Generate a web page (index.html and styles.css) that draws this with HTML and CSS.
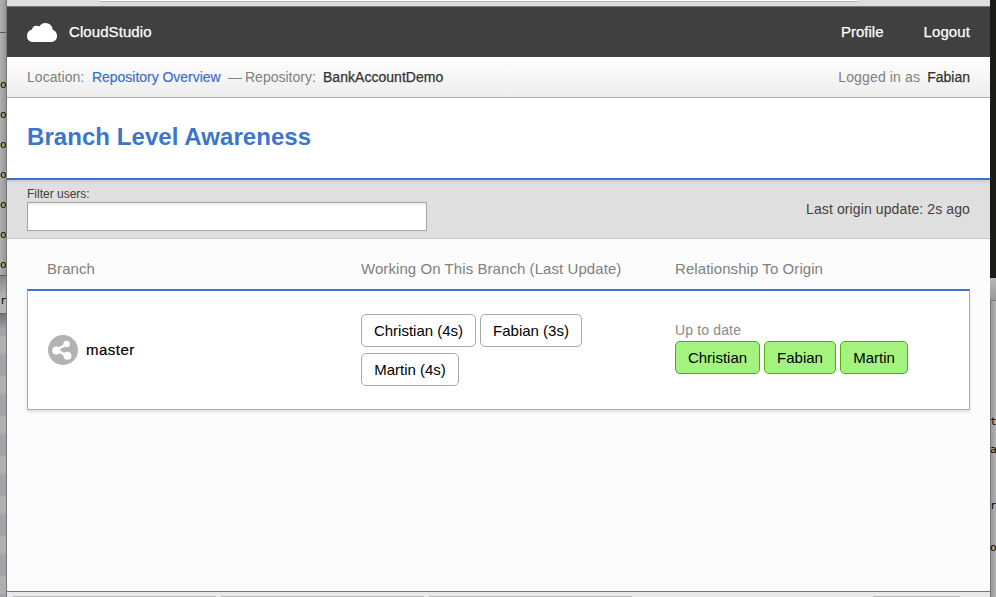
FILE: index.html
```html
<!DOCTYPE html>
<html lang="en">
<head>
<meta charset="utf-8">
<title>CloudStudio</title>
<link rel="stylesheet" href="styles.css">
</head>
<body>
<div class="desktop">
  <aside class="behind-left">
    <div class="editor-left"><span>o</span><span>o</span><span>o</span><span>o</span><span>o</span><span>o</span><span>o</span></div>
    <div class="status-left"><span>r</span></div>
    <div class="list-left"></div>
  </aside>
  <main class="window">
    <div class="chrome-top"><div class="address"></div></div>
    <nav class="nav">
      <div class="brand">
        <svg class="cloud" viewBox="0 0 30 19" width="30" height="19"><path fill="#fff" d="M6 19C2.300 19 0 16.500 0 13 0 9.600 2 7.200 5 6.600 5.300 4.300 7 2.800 9.400 2.800c1.200 0 2.200.2 3 .7C13.600 1.300 15.600 0 18.200 0c4.200 0 7.300 2.900 7.500 6.800 2.700 1 4.300 3.200 4.300 6.200 0 3.500-2.300 6-6 6z"/></svg>
        <span class="t-brand">CloudStudio</span>
      </div>
      <div class="links"><a class="t-profile">Profile</a><a class="t-logout">Logout</a></div>
    </nav>
    <div class="crumbs">
      <div class="path"><span class="t-loc">Location:</span><a class="t-over">Repository Overview</a><span class="t-dash">—</span><span class="t-repo">Repository:</span><strong class="t-bank">BankAccountDemo</strong></div>
      <div class="user"><span class="t-logged">Logged in as</span><strong class="t-user">Fabian</strong></div>
    </div>
    <header class="title"><h1>Branch Level Awareness</h1></header>
    <div class="filter">
      <div class="field"><label for="f">Filter users:</label><input id="f" type="text"></div>
      <span class="t-update">Last origin update: 2s ago</span>
    </div>
    <section class="content">
      <div class="row head"><span class="t-h1">Branch</span><span class="t-h2">Working On This Branch (Last Update)</span><span class="t-h3">Relationship To Origin</span></div>
      <div class="row card">
        <div class="branch">
          <svg width="30" height="30" viewBox="0 0 30 30"><circle cx="15" cy="15" r="15" fill="#b2b2b2"/><path d="M18.500 9 8.500 15.200l11 5.800" fill="none" stroke="#fff" stroke-width="2.600"/><g fill="#fff"><circle cx="18.600" cy="9" r="3.300"/><circle cx="8.200" cy="15.400" r="4"/><circle cx="19.400" cy="20.800" r="4"/></g></svg>
          <span class="t-master">master</span>
        </div>
        <div class="tags"><span class="tag w115">Christian (4s)</span><span class="tag w102">Fabian (3s)</span><span class="tag w98">Martin (4s)</span></div>
        <div class="origin">
          <span class="t-up">Up to date</span>
          <div class="tags"><span class="tag green w85">Christian</span><span class="tag green w72">Fabian</span><span class="tag green w68">Martin</span></div>
        </div>
      </div>
    </section>
    <div class="chrome-bottom"><i></i><i></i><i></i><i class="last"></i></div>
  </main>
  <aside class="behind-right">
    <div class="terminal"></div><div class="bar"></div>
    <div class="editor-right"><span>t</span><span>a</span><span></span><span>r</span><span>o</span></div>
  </aside>
</div>
</body>
</html>
```
FILE: styles.css
```css
* { box-sizing: border-box; }
body { margin: 0; overflow: hidden; font: 15px/20px "Liberation Sans", sans-serif; color: #000; }
.desktop { display: grid; grid-template-columns: 7px 983px 6px; width: 996px; height: 597px; }
.behind-left, .behind-right { overflow: hidden; height: 597px; font: 11px/30px "DejaVu Sans Mono", monospace; color: #000; }
.behind-left { border-right: 1px solid #777; }
.behind-left span, .behind-right span { display: block; }
.editor-left { height: 276px; padding-top: 70px; background: linear-gradient(#555, #555) 0 32px / 6px 1px no-repeat, linear-gradient(90deg, #b1b1b1, #979797); border-bottom: 1px solid #555; }
.editor-left span { height: 30px; }
.status-left { height: 38px; line-height: 50px; background: linear-gradient(#888, #b5b5b5 60%); border-bottom: 1px solid #666; }
.list-left { height: 283px; background: linear-gradient(rgba(0,0,0,.3), transparent 16px), repeating-linear-gradient(#a2a4aa 0 22px, #b0b0b0 22px 40px); }
.window { display: flex; flex-direction: column; height: 597px; background: #fcfcfc; }
.chrome-top { height: 7px; background: #dededc; border-bottom: 1px solid #777; }
.address { height: 2px; width: 758px; margin-left: 93px; background: #fff; border-bottom: 1px solid #b4b4b4; }
.nav { display: flex; justify-content: space-between; align-items: center; height: 50px; padding: 0 20px; background: #404040; color: #fff; -webkit-text-stroke: .25px; }
.brand { display: flex; align-items: center; gap: 12px; }
.t-brand { letter-spacing: .08px; }
.links { display: flex; gap: 40px; }
.t-logout { letter-spacing: .1px; }
.crumbs { display: flex; justify-content: space-between; align-items: center; height: 41px; padding: 0 20px; background: linear-gradient(#fff, #ededed); border-bottom: 1px solid #aaa; color: #808080; font-size: 14px; }
.path, .user { display: flex; }
strong { font-weight: 400; color: #333; -webkit-text-stroke: .25px; }
.t-loc { width: 65px; letter-spacing: .05px; }
.t-over { width: 136px; letter-spacing: -.03px; color: #3c6fc9; -webkit-text-stroke: .2px; }
.t-dash { width: 17px; }
.t-repo { width: 78px; }
.t-bank { letter-spacing: .03px; }
.t-logged { letter-spacing: .15px; }
.t-user { margin-left: 7px; }
.title { display: flex; align-items: center; height: 82px; padding: 0 20px 2px; background: #fff; border-bottom: 2px solid #3b75ca; }
h1 { margin: 0; font-size: 24px; line-height: 30px; letter-spacing: .06px; color: #3c76ca; }
.filter { display: flex; justify-content: space-between; align-items: center; height: 59px; padding: 0 20px; background: linear-gradient(#ccc, #dfdfdf 4px); border-bottom: 1px solid #cbcbcb; color: #404040; }
.field { display: flex; flex-direction: column; padding-bottom: 1px; }
.t-update { font-size: 14px; letter-spacing: .11px; }
label { font-size: 12px; line-height: 16px; }
input { width: 400px; height: 29px; border: 1px solid #a5a5a5; background: #fff; box-shadow: inset 0 2px 2px rgba(0,0,0,.07); }
.content { flex: 1; padding: 0 20px; }
.row { display: grid; grid-template-columns: 314px 314px 1fr; align-items: center; }
.head { height: 50px; padding: 10px 20px 0; color: #808080; letter-spacing: .07px; }
.card { height: 121px; padding: 0 19px; background: #fff; border: 1px solid #adadad; border-top: 2px solid #3b75ca; box-shadow: 0 2px 3px rgba(0,0,0,.12); }
.branch { display: flex; align-items: center; gap: 8px; margin-left: 1px; }
.t-master { letter-spacing: .5px; -webkit-text-stroke: .2px; }
.tags { display: flex; flex-wrap: wrap; gap: 6px 4px; }
.tag { display: flex; align-items: center; justify-content: center; height: 33px; border: 1px solid #aaa; border-radius: 5px; background: #fff; white-space: nowrap; }
.green { border-color: #53a915; background: #a5f37f; }
.w115 { width: 115px; } .w102 { width: 102px; } .w98 { width: 98px; } .w85 { width: 85px; } .w72 { width: 72px; } .w68 { width: 68px; }
.t-up { display: block; height: 21px; line-height: 20px; font-size: 14px; letter-spacing: .15px; color: #8a8a8a; }
.origin { padding-bottom: 6px; }
.chrome-bottom { display: flex; gap: 5px; height: 6px; padding: 4px 30px 0 6px; background: #e9e9e9; border-top: 1px solid #777; }
.chrome-bottom i { width: 203px; height: 1px; background: #b5b5b5; }
.chrome-bottom .last { width: 87px; margin-left: auto; }
.terminal { height: 278px; background: #1b1c17; }
.bar { height: 23px; background: linear-gradient(#b6b6b6, #999); border-bottom: 1px solid #777; }
.editor-right { height: 296px; padding-top: 106px; line-height: 30px; background: linear-gradient(90deg, #777 1px, #999 1px, #b2b2b2); }
.editor-right span { height: 28px; }
.editor-right span:nth-child(4) { height: 42px; }
```
